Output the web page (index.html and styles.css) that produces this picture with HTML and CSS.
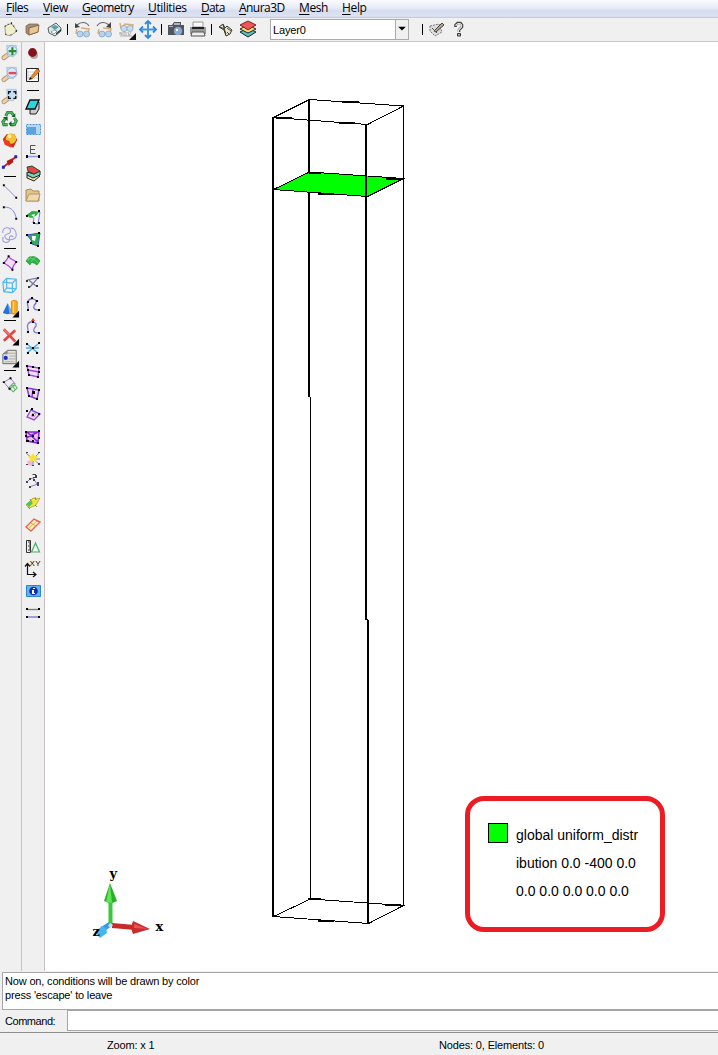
FILE: index.html
```html
<!DOCTYPE html>
<html lang="en">
<head>
<meta charset="utf-8">
<title>Anura3D</title>
<link rel="stylesheet" href="styles.css">
</head>
<body>
<div class="app">
<nav class="menu">
<span class="m-files"><u>F</u>iles</span><span class="m-view"><u>V</u>iew</span><span class="m-geo"><u>G</u>eometry</span><span class="m-util"><u>U</u>tilities</span><span class="m-data"><u>D</u>ata</span><span class="m-anura"><u>A</u>nura3D</span><span class="m-mesh"><u>M</u>esh</span><span class="m-help"><u>H</u>elp</span>
</nav>
<header class="toolbar">
<svg class="tool" viewBox="-1 0 22 24"><path d="M4 8 11 5l2 3 4 5-7 5-5-1z" fill="#f0eecb" stroke="#8a8870" stroke-width=".8" /><path d="M4 8h1M7 6h1M11 4v2M13 8h1M16 12v2M10 17h1M5 16v1" stroke="#222" stroke-width="1.200"/></svg>
<svg class="tool" viewBox="-1 0 22 24"><path d="M4 15V8l3-2 9 0 0 8-9 3z" fill="#a58d76" stroke="#7a6a59" stroke-width=".8"/><path d="m7 10 10-3-1 7-9 3z" fill="#e9c793" stroke="#72593d" stroke-width=".8"/></svg>
<svg class="tool" viewBox="-1 0 22 24"><path d="m4 10 8-5 5 5v3l-6 5-6-3z" fill="#dfe8e6" stroke="#455" stroke-width=".9"/><path d="m7 9 4-2 4 2-4 3z" fill="#5f9fac"/><path d="m7 14 3-2 3 1-3 3z" fill="#fff" stroke="#347784" stroke-width=".6"/><path d="m12 17 5-4v-2l-5 4z" fill="#344"/></svg>
<i class="sep"></i>
<svg class="tool" viewBox="0 0 22 24"><path d="m6 11 -1 4 3 1m2-6 8 1-1 4" fill="none" stroke="#d8ad7d" stroke-width="1.500"/><circle cx="9" cy="16" r="3" fill="#b8d3ec" stroke="#7fa5c8" stroke-width=".8"/><circle cx="15.500" cy="16" r="3" fill="#b8d3ec" stroke="#7fa5c8" stroke-width=".8"/><path d="M18 8C15 3 9 4 6 7" fill="none" stroke="#666" stroke-width="1.200"/><path d="m4 5 0 5 5-1z" fill="#444"/></svg>
<svg class="tool" viewBox="0 0 22 24"><path d="m6 11 -1 4 3 1m2-6 8 1-1 4" fill="none" stroke="#d8ad7d" stroke-width="1.500"/><circle cx="9" cy="16" r="3" fill="#b8d3ec" stroke="#7fa5c8" stroke-width=".8"/><circle cx="15.500" cy="16" r="3" fill="#b8d3ec" stroke="#7fa5c8" stroke-width=".8"/><path d="M4 8c3-5 9-4 12-1" fill="none" stroke="#666" stroke-width="1.200"/><path d="m18 4 0 6-5-1z" fill="#444"/></svg>
<svg class="tool" viewBox="0 0 22 24"><path d="m5 5 1 5 4-4 8 1-1 4" fill="none" stroke="#d8ad7d" stroke-width="1.500"/><circle cx="9" cy="10.500" r="3" fill="#c5ddf3" stroke="#8fa9c0" stroke-width=".8"/><circle cx="15" cy="10.500" r="3" fill="#c5ddf3" stroke="#8fa9c0" stroke-width=".8"/><path d="M5 17v-3l2 3v-3M9 18v-4h2v4M13 14l1 4 2-4M5 18h12" fill="none" stroke="#aaa" stroke-width=".9"/><path d="M21 15v7h-7z" fill="#111"/></svg>
<svg class="tool" viewBox="0 0 22 24"><path d="M11 4v15M4 11.500h15" stroke="#3f97df" stroke-width="2"/><path d="m8 6 3-3 3 3M8 17l3 3 3-3M6 8.500l-3 3 3 3M16 8.500l3 3-3 3" fill="none" stroke="#3188d8" stroke-width="1.800"/></svg>
<i class="sep"></i>
<svg class="tool" viewBox="0 0 22 24"><path d="M3 7h4l2-3h7v3h3v10H3z" fill="#50565b"/><path d="M9 5h6v2H9zM4 8h4v1H4z" fill="#adb4bc"/><circle cx="13" cy="13" r="3.800" fill="#7fabe0" stroke="#9aa6b5"/><circle cx="12" cy="12" r="1.200" fill="#fff"/></svg>
<svg class="tool" viewBox="0 0 22 24"><path d="M6 4h10v5H6z" fill="#f8f8f8" stroke="#999"/><path d="M3 9h16v7H3z" fill="#999"/><path d="M5 9h12v2H5z" fill="#222"/><path d="M5 14h12l1 4H4z" fill="#eee" stroke="#555"/></svg>
<i class="sep"></i>
<svg class="tool" viewBox="0 0 22 24"><path d="m4 9 4-3 2 4 2-2 5 4-2 4-4 2-2-6z" fill="#eee6c3" stroke="#333"/><path d="m5 9 5 2m-2-4 3 9m1-6 4 3m-4 1 2 2" stroke="#222" stroke-width=".8"/></svg>
<svg class="tool" viewBox="0 0 22 24"><path d="m3 14 8-4 8 4-8 5z" fill="#58c1c5" stroke="#222"/><path d="m3 11 8-4 8 4-8 4z" fill="#ffe47c" stroke="#222"/><path d="m3 7 8-4 8 4-8 5z" fill="#f15656" stroke="#722"/></svg>
<div class="combo"><span>Layer0</span><b><svg viewBox="0 0 12 20"><path d="M2 7h8L6 11z" fill="#000"/></svg></b></div>
<i class="sep last"></i>
<svg class="tool" viewBox="0 0 22 24"><path d="m4 8 9-2 3 8-7 4-5-5z" fill="#ddd" stroke="#777" stroke-dasharray="2 1"/><path d="m8 13 8-8 2 2-8 7z" fill="#b6a48c" stroke="#222" stroke-width=".8"/><path d="m6 10 5 5" stroke="#555"/></svg>
<svg class="tool" viewBox="0 0 22 24"><path d="M7.500 9V7l2-2h3l1.500 2v2l-3 3v2" fill="none" stroke="#444" stroke-width="2.600"/><path d="M8 8V7l2-1.500h2L13.500 7v2l-3 3v2" fill="none" stroke="#dce8db" stroke-width="1.200"/><path d="M9.500 15.500h3V18h-3z" fill="#bbc8ba" stroke="#333"/></svg>
</header>
<main class="work">
<aside class="col first">
<svg viewBox="0 0 22 22"><path d="m4 16 4-3" stroke="#b59774" stroke-width="5" stroke-linecap="round"/><path d="m4 16 4-3" stroke="#ecd2ac" stroke-width="3" stroke-linecap="round"/><path d="M7 3h10l1 8-4 4-6-1z" fill="#c7def4" stroke="#9ab8d3" stroke-width=".7"/><circle cx="12.500" cy="8.500" r="5" fill="#d9e9f7" stroke="#8aadcd" stroke-width=".8"/><path d="M9 9h8M13 5v8" stroke="#2b8b35" stroke-width="2.200"/></svg>
<svg viewBox="0 0 22 22"><path d="m4 16 4-3" stroke="#b59774" stroke-width="5" stroke-linecap="round"/><path d="m4 16 4-3" stroke="#ecd2ac" stroke-width="3" stroke-linecap="round"/><path d="M7 3h10l1 8-4 4-6-1z" fill="#c7def4" stroke="#9ab8d3" stroke-width=".7"/><circle cx="12.500" cy="8.500" r="5" fill="#d9e9f7" stroke="#8aadcd" stroke-width=".8"/><path d="M9 9h8" stroke="#e94658" stroke-width="2.500"/></svg>
<svg viewBox="0 0 22 22"><path d="m4 16 4-3" stroke="#b59774" stroke-width="5" stroke-linecap="round"/><path d="m4 16 4-3" stroke="#ecd2ac" stroke-width="3" stroke-linecap="round"/><path d="M7 3h10l1 8-4 4-6-1z" fill="#c7def4" stroke="#9ab8d3" stroke-width=".7"/><path d="M9 8V5.500h2.500M14 5.500h2.500V8M9 10v2.500h2.500M14 12.500h2.500V10" fill="none" stroke="#111" stroke-width="1.400"/></svg>
<svg viewBox="0 0 22 22"><path d="m6 8 2-4h4l2 3M15 10l2 3-2 4h-4M8 17H4l-1-3 3-4" fill="none" stroke="#23602f" stroke-width="3"/><path d="m6 8 2-4h4l2 3M15 10l2 3-2 4h-4M8 17H4l-1-3 3-4" fill="none" stroke="#45bd5b" stroke-width="1.700"/><path d="m12 9 4 0 0-4zM12 13v6l-3-3zM3 9h5v4z" fill="#165c28"/></svg>
<svg viewBox="0 0 22 22"><path d="m3 9 4-5 8 0 3 6-4 8-9-4z" fill="#cf2b20"/><circle cx="11.500" cy="8.500" r="5.500" fill="#f1c232"/><path d="m3 9 7 2 2 7-7-3z" fill="#e83f25"/><circle cx="10" cy="6" r="2" fill="#fff19a"/></svg>
<svg viewBox="0 0 22 22"><path d="m4 15 12-10" stroke="#d62222" stroke-width="2"/><path d="m7 9 6-3 1 4-5 4z" fill="#b71919"/><path d="M2 14h3v3H2zM15 3h3v3h-3z" fill="#2020bc"/></svg>
<i></i>
<svg viewBox="0 0 22 22"><path d="m4 5 13 13" stroke="#8585e6"/><path d="M3 4h2v2H3zM16 17h2v2h-2z"/></svg>
<svg viewBox="0 0 22 22"><path d="M4 5c8-1 12 5 13 12" fill="none" stroke="#8585e6"/><path d="M3 4h2v2H3zM16 16h2v2h-2z"/></svg>
<svg viewBox="0 0 22 22"><path d="M3 9C2 3 11 1 11 7c0 4-6 2-6 5 0 6 12 5 12-1C17 6 14 3 11 4M3 17c2 3 8 2 7-2-1-3 2-4 4-2M3 17v-4" fill="none" stroke="#9c9ce0" stroke-width="1.100"/></svg>
<i></i>
<svg viewBox="0 0 22 22"><path d="m9 4c2 4 5 3 8 6-3 3-4 5-4 8-3-4-6-5-9-7 2-2 4-4 5-7" fill="#f4dcf8" stroke="#a545d8" stroke-width="1.200"/><path d="M8 3h2v2H8zM16 9h2v2h-2zM12 17h2v2h-2zM3 10h2v2H3z"/></svg>
<svg viewBox="0 0 22 22"><path d="M3 8 7 4l10 1v10l-4 4-9-1zM3 8l10 1 4-4M13 9v10M7 4v10l10 1M7 14l-3 4" fill="none" stroke="#4fb6ee" stroke-width="1.200"/></svg>
<svg viewBox="0 0 22 22"><path d="m3 17 5-10 5 10c-3 2-7 2-10 0" fill="#2672d7"/><path d="m8 7 2 11 3-1z" fill="#76afff"/><path d="M12 5q3-2 6 0v13q-3 1-6 0z" fill="#f7ae25" stroke="#d48c18"/><path d="M14 5v12" stroke="#ffe594"/><path d="M20 15v7h-7z"/></svg>
<i></i>
<svg viewBox="0 0 22 22"><path d="m4 5 12 13M16 6 4 17" stroke="#e54444" stroke-width="2.800"/><path d="m4 5 6 6" stroke="#ff9a92"/><path d="M20 15v7h-7z"/></svg>
<svg viewBox="0 0 22 22"><path d="M3 8 8 4h9v14H3z" fill="#e5e5dc" stroke="#666"/><path d="M8 7h8M10 10h6M9 13h7M5 16h10" stroke="#999" stroke-width=".8"/><path d="M3 8 8 4v4z" fill="#888"/><circle cx="6" cy="12" r="2.200" fill="#192ed5"/><path d="M20 15v7h-7z"/></svg>
<i></i>
<svg viewBox="0 0 22 22"><path d="m4 8 7-4 5 6-6 5z" fill="#eee" stroke="#a66ddd"/><path d="m9 14 5-5 4 5-4 4zM12 11l4 5M10 15l6-4" fill="none" stroke="#63b56c" stroke-width="1.100"/><path d="M3 7h2v2H3zM10 3h2v2h-2zM9 14h2v2H9z"/></svg>
</aside>
<aside class="col second">
<svg viewBox="0 0 22 22"><circle cx="12" cy="13" r="4" fill="#aaa"/><circle cx="10.500" cy="10.500" r="4.400" fill="#851219"/></svg>
<svg viewBox="0 0 22 22"><path d="M4.500 4.500h12v13h-12z" fill="#fff" stroke="#222"/><path d="M6 5v12M5 8h11M5 11h11M5 14h11" stroke="#bbb" stroke-width=".7"/><path d="m8 14 7-9 3 2-8 8z" fill="#e88c2a" stroke="#a95b1a" stroke-width=".7"/><path d="m7 16 1-3 2 2z"/></svg>
<i></i>
<svg viewBox="0 0 22 22"><path d="m8 14 9-8v7l-3 5H8z" fill="#ccc" stroke="#222"/><path d="m8 4 9 0-4 9H4z" fill="#28d7df" stroke="#111" stroke-width="1.400"/></svg>
<svg viewBox="0 0 22 22"><path d="M4.500 6.500h14v10h-14z" fill="#b8d6f2" stroke="#4b93d8" stroke-dasharray="2 1"/><path d="M5 9h9v7H5z" fill="#5ba2df"/></svg>
<svg viewBox="0 0 22 22"><path d="M13.500 5.500h-5v8h5M9 9.500h4" fill="none" stroke="#555"/><path d="M5 16.500h12" stroke="#9797dc" stroke-width="1.500"/><path d="M4 15h2v3H4zM16 15h2v3h-2z"/></svg>
<svg viewBox="0 0 22 22"><path d="m5 13 6-3 7 4-6 5-7-3z" fill="#f2e3a0" stroke="#222"/><path d="m5 10 7 2 6-3v4l-7 3-6-3z" fill="#83d0b4" stroke="#123"/><path d="m5 5 5-1 8 5-6 3-6-3z" fill="#e94643" stroke="#254b35"/></svg>
<svg viewBox="0 0 22 22"><path d="M4 17V6l5-1 2 2h6v10z" fill="#e3c48d" stroke="#a98a5a"/><path d="m4 17 3-7h11l-2 7z" fill="#f0d9ac" stroke="#b3986c"/></svg>
<svg viewBox="0 0 22 22"><path d="m5 9 5-3h8l-2 12-5-1 1-5z" fill="#f4f6ff" stroke="#7777df"/><path d="m5 9 5-4 7 1-3 4-6 2z" fill="#30ae40"/><path d="m9 9 4-1-1 3z" fill="#fff"/><path d="M4 9h2v2H4zM16 4h2v2h-2zM11 16h2v2h-2zM16 16h2v2h-2z"/></svg>
<svg viewBox="0 0 22 22"><path d="m5 7 13-2-2 13-6-2-1-4z" fill="#25b34a" stroke="#4747c5"/><path d="m10 8 4 0-1 5-3-1z" fill="#fff"/><path d="M4 6h2v2H4zM16 4h2v2h-2zM15 17h2v2h-2zM8 14h2v2H8z"/></svg>
<svg viewBox="0 0 22 22"><path d="m4 11 3-4q7-2 11 4l-3 4q-6-5-7 0z" fill="#26b445" stroke="#188732" stroke-width=".6"/><path d="m5 9q7-2 11 4M10 6q-3 2-4 5M14 7q-4 2-5 5" fill="none" stroke="#76d577" stroke-width=".8"/></svg>
<svg viewBox="0 0 22 22"><path d="m5 8 11-2-8 9m1-5 5 4M7 8l3 3" fill="none" stroke="#7777a0" stroke-width="1.200"/><path d="M4 8h2v2H4zM15 5h2v2h-2zM6 14h2v2H6zM14 13h2v2h-2z" fill="#333"/></svg>
<svg viewBox="0 0 22 22"><path d="M6 15c1-3-2-5 0-8 3-4 9-2 8 2-3 3-4 7 3 7" fill="none" stroke="#7765d6" stroke-width="1.300"/><path d="M5 15h2v2H5zM5 7h2v2H5zM9 3h2v2H9zM14 6h2v2h-2zM16 15h2v2h-2z"/></svg>
<svg viewBox="0 0 22 22"><path d="M6 16c1-3-2-5 0-8 3-4 9-2 8 2-3 3-4 7 3 7" fill="none" stroke="#8575db" stroke-width="1.300"/><path d="M5 15h2v2H5zM10 5h2v2h-2zM16 16h2v2h-2z"/><path d="M9 5h4L11 2z" fill="#e63131"/></svg>
<svg viewBox="0 0 22 22"><path d="m5 6 11 9M16 6 5 15M4 10h13" stroke="#55b0e6" stroke-width="1.500"/><path d="M10 9h2v2h-2zM5 14h2v2H5zM14 14h2v2h-2zM16 4h2v2h-2zM4 5h2v2H4z"/></svg>
<svg viewBox="0 0 22 22"><path d="m5 6 12 2-1 9-9-2zM6 10l11 2" fill="#f2dffc" stroke="#9b44de" stroke-width="1.400"/><path d="M4 5h2v2H4zM16 7h2v2h-2zM6 14h2v2H6zM15 16h2v2h-2zM5 9h2v2H5zM16 11h2v2h-2zM10 6h2v2h-2z"/></svg>
<svg viewBox="0 0 22 22"><path d="m5 6 12 2-2 9-8-3zM11 7l-1 8" fill="#eed8f8" stroke="#8438d8" stroke-width="1.400"/><path d="M4 5h2v2H4zM16 7h2v2h-2zM6 13h2v2H6zM14 16h2v2h-2zM10 9h3v3h-3z"/></svg>
<svg viewBox="0 0 22 22"><path d="m5 13 4-7 9 4-6 6z" fill="#f7e4fc" stroke="#8c4ad9" stroke-width="1.400"/><path d="m9 12 2-3 3 1-2 3z" fill="#fff" stroke="#c780dc"/><path d="M4 6h2v2H4zM9 4h2v2H9zM16 9h2v2h-2zM10 10h2v2h-2z"/></svg>
<svg viewBox="0 0 22 22"><path d="m4 6 13 0-1 11-11-2zM4 12l12-6M5 6l11 10" fill="#e9c2ec" stroke="#8024d6" stroke-width="1.500"/><path d="M3 5h2v2H3zM16 4h2v2h-2zM4 14h3v2H4zM15 16h2v2h-2zM10 9h2v2h-2zM3 9h2v2H3zM16 11h2v2h-2zM10 14h2v2h-2z"/></svg>
<svg viewBox="0 0 22 22"><path d="m11 11-7-6m7 6 6-6m-6 6-6 6m6-6 6 5m-6-5v7m0-7h7" stroke="#8a7abe"/><path d="m10 12-5 1 1 4 4 1z" fill="#f5b4db"/><path d="m6 8 3 0 2-3 2 3 3 0-2 3 1 3-4-1-4 1 1-3z" fill="#f6e141"/><path d="M4 4h2v1H4zM16 4h2v1h-2zM4 16h2v1H4zM10 17h2v1h-2zM16 15h2v2h-2z" fill="#444"/></svg>
<svg viewBox="0 0 22 22"><path d="m5 12 3-3 3-1 4 6M7 17l9-3" fill="none" stroke="#8383cc"/><path d="M4 11h2v2H4zM7 8h2v2H7zM10 4h4v1h-3zM13 5h2v2h-2zM11 7h4v1h-4zM15 12h2v4h-2zM7 16h2v2H7zM11 9h2v2h-2z" fill="#444"/></svg>
<svg viewBox="0 0 22 22"><path d="m4 13 7-7 3 1 4-1-4 7-4 2-3 1z" fill="#f2e43d" stroke="#b3a72d" stroke-width=".8"/><path d="m4 12 4-3 3 2-4 4z" fill="#46c766"/><path d="m8 7 2 3M13 5l1 3M6 15l2 2M13 13l2 2" stroke="#775" stroke-width=".8"/></svg>
<svg viewBox="0 0 22 22"><path d="m4 13 8-8 6 3-9 9z" fill="#fff6b4" stroke="#ee6060" stroke-width="1.400"/><path d="m6 15 9-8M9 9l5 3" stroke="#eaa05b"/></svg>
<svg viewBox="0 0 22 22"><path d="M4.500 4.500h4v12h-4z" fill="#eee" stroke="#333"/><path d="M6 6h2M7 8h1M6 10h2M7 12h1M6 14h2" stroke="#333"/><path d="m9.500 16 4-9 4 9z" fill="#edf5eb" stroke="#53a870" stroke-width="1.200"/></svg>
<svg viewBox="0 0 22 22"><path d="M5.500 6v10.500H14M3 8.500l2.500-3L8 8.500M11 14l3 2.500-3 2.500" fill="none" stroke="#111" stroke-width="1.200"/><text class="xy" x="7.500" y="8">XY</text></svg>
<svg viewBox="0 0 22 22"><path d="M4.500 5.500h14v11h-14z" fill="#62b2ed" stroke="#2987cf"/><circle cx="11.500" cy="11" r="4.300" fill="#152bae"/><path d="M11 8h2v1h-2zM10 10h2v3h1v1h-3" fill="#fff"/></svg>
<svg viewBox="0 0 22 22"><path d="M5 7.500h12" stroke="#777" stroke-width="1.300"/><path d="M5 15h12" stroke="#8989e1" stroke-width="1.600"/><path d="M4 6h2v2H4zM16 6h2v2h-2zM4 14h2v2H4zM16 14h2v2h-2z"/></svg>
</aside>
<section class="canvas">
<svg class="scene" viewBox="45 42 673 929">
<g shape-rendering="crispEdges" fill="none" stroke="#000">
<path d="M309 99V397" stroke-width="2"/><path d="M310.500 397V899M403.500 106V906"/>
<path d="m273.500 189.500 36-17.500 94 6.500-36 18z" fill="#0f0"/>
<path d="m309 172.500 12 1M386 178.500h17M318 193.500h16" stroke-width="2"/>
<path d="m273.500 117.500 36-18 94 6.500-36 18.500zM273.500 916.500l37-17.500 93 6.500-35 18z"/>
<path d="M342 102h17M276 118h16M339 123h16M308 899h13M385 905h16M318 921h16" stroke-width="2"/>
<path d="M273 118V917M366 124V620M367 620h1M368 620V924" stroke-width="2"/>
</g>
<path d="M108.500 897h4v28h-4z" fill="#39c936"/><path d="m110 883 7 18q-6 4-13 0z" fill="#29ad2b"/><path d="m110 883 2 20-6-1z" fill="#5ee455"/>
<path d="m112 923 23 2v5l-23-2z" fill="#c82929"/><path d="m133 921 17 8-17 5q-3-6 0-13" fill="#c92b2e"/><path d="m134 924 14 5-14-1z" fill="#e65653"/>
<path d="m101 927 8-5 3 4-9 6z" fill="#3799dc"/><path d="m95 932 7-6q5 1 5 7l-7 5z" fill="#45b6ef"/><path d="m110 923 3 2-2 3-3-2z" fill="#bce8ff"/>
<g class="axis"><text x="109.500" y="878">y</text><text x="155.500" y="931">x</text><text x="92.500" y="936">z</text></g>
</svg>
<div class="legend"><i></i><div>global uniform_distr<br>ibution 0.0 -400 0.0<br><span>0.0 0.0 0.0 0.0 0.0</span></div></div>
</section>
</main>
<section class="messages"><p>Now on, conditions will be drawn by color</p><p class="press">press 'escape' to leave</p></section>
<section class="command"><label>Command:</label><div></div></section>
<footer class="status"><span class="zoom">Zoom: x 1</span><span class="nodes">Nodes: 0, Elements: 0</span></footer>
</div>
</body>
</html>
```
FILE: styles.css
```css
* { box-sizing: border-box; }
body { margin: 0; width: 718px; height: 1055px; overflow: hidden; background: #f0f0f0; color: #000; }
.app { display: flex; flex-direction: column; height: 1055px; }
svg { display: block; flex: none; }
.menu { height: 18px; flex: none; display: flex; padding-left: 6px; background: linear-gradient(#fafbfe 0, #e7ebf7 45%, #d5dcee 60%, #dce3f3 90%, #bdc4d6 100%); font: 12px/15px "Open Sans", "Noto Sans", sans-serif; white-space: nowrap; }
.menu span { flex: none; }
.menu u { text-underline-offset: 2px; text-decoration-thickness: 1px; }
.m-files { width: 37px; letter-spacing: -.5px; }
.m-view { width: 39px; letter-spacing: -.3px; }
.m-geo { width: 66px; letter-spacing: -.5px; }
.m-util { width: 53px; letter-spacing: -.35px; }
.m-data { width: 38px; letter-spacing: -.65px; }
.m-anura { width: 60px; letter-spacing: -.55px; }
.m-mesh { width: 43px; letter-spacing: -.4px; }
.m-help { letter-spacing: -.35px; }
.toolbar { height: 24px; flex: none; display: flex; border-bottom: 1px solid #d0c5c5; }
.tool { width: 22px; height: 24px; }
.toolbar > .tool:first-child { width: 21px; }
.sep { width: 6px; flex: none; height: 11px; margin-top: 6px; background: linear-gradient(#000, #000) 2px 0 / 1px 100% no-repeat; }
.combo { width: 139px; height: 21px; margin: 1px 0 0 11px; flex: none; border: 1px solid #aaa; background: #fff; display: flex; justify-content: space-between; font: 11px/20px "Liberation Sans", sans-serif; padding-left: 2px; letter-spacing: -.15px; }
.combo b { width: 13px; border-left: 1px solid #aaa; background: #f0f0f0; }
.combo b svg { width: 12px; height: 19px; }
.sep.last { margin-left: 11px; }
.work { height: 929px; flex: none; display: flex; }
.col { display: flex; flex-direction: column; flex: none; }
.first { width: 22px; border-right: 1px solid #cdbfc1; }
.second { width: 23px; border-right: 1px solid #cdbfc1; }
.col svg { width: 22px; height: 22px; }
.first svg { width: 21px; }
.col i { height: 6px; flex: none; background: linear-gradient(#000, #000) 4px 2px / 12px 1px no-repeat; }
.second i { height: 10px; background-position: 5px 4px; }
.xy { font: 8px "Liberation Sans", sans-serif; letter-spacing: .5px; }
.canvas { position: relative; width: 673px; background: #fff; }
.scene { width: 673px; height: 929px; }
.axis { font: bold 13px "DejaVu Serif", serif; }
.legend { position: absolute; left: 420px; top: 754px; width: 200px; height: 136px; border: 5px solid #ed1c24; border-radius: 19px; padding: 21px 0 0 18px; display: flex; gap: 8px; font: 14px/28px "Liberation Sans", sans-serif; white-space: nowrap; }
.legend i { width: 20px; height: 20px; flex: none; border: 1px solid #000; background: #0f0; margin-top: 1px; }
.legend div { margin-top: -1px; }
.messages { height: 38px; flex: none; margin: 1px 0 0 2px; border: 1px solid #a5a5a5; border-right: 0; background: #fff; padding: 1px 0 0 2px; font: 11px/14px "Liberation Sans", sans-serif; letter-spacing: -.17px; }
.messages p { margin: 0; }
.command { height: 22px; flex: none; display: flex; padding-left: 5px; font: 11px/22px "Liberation Sans", sans-serif; }
.command label { width: 62px; letter-spacing: -.45px; }
.command div { flex: 1; height: 21px; border: 1px solid #a5a5a5; border-right: 0; background: #fff; }
.status { flex: 1; border-top: 1px solid #8d8d8d; display: flex; font: 11px/25px "Liberation Sans", sans-serif; letter-spacing: -.15px; padding-left: 107px; }
.zoom { width: 332px; }
```
